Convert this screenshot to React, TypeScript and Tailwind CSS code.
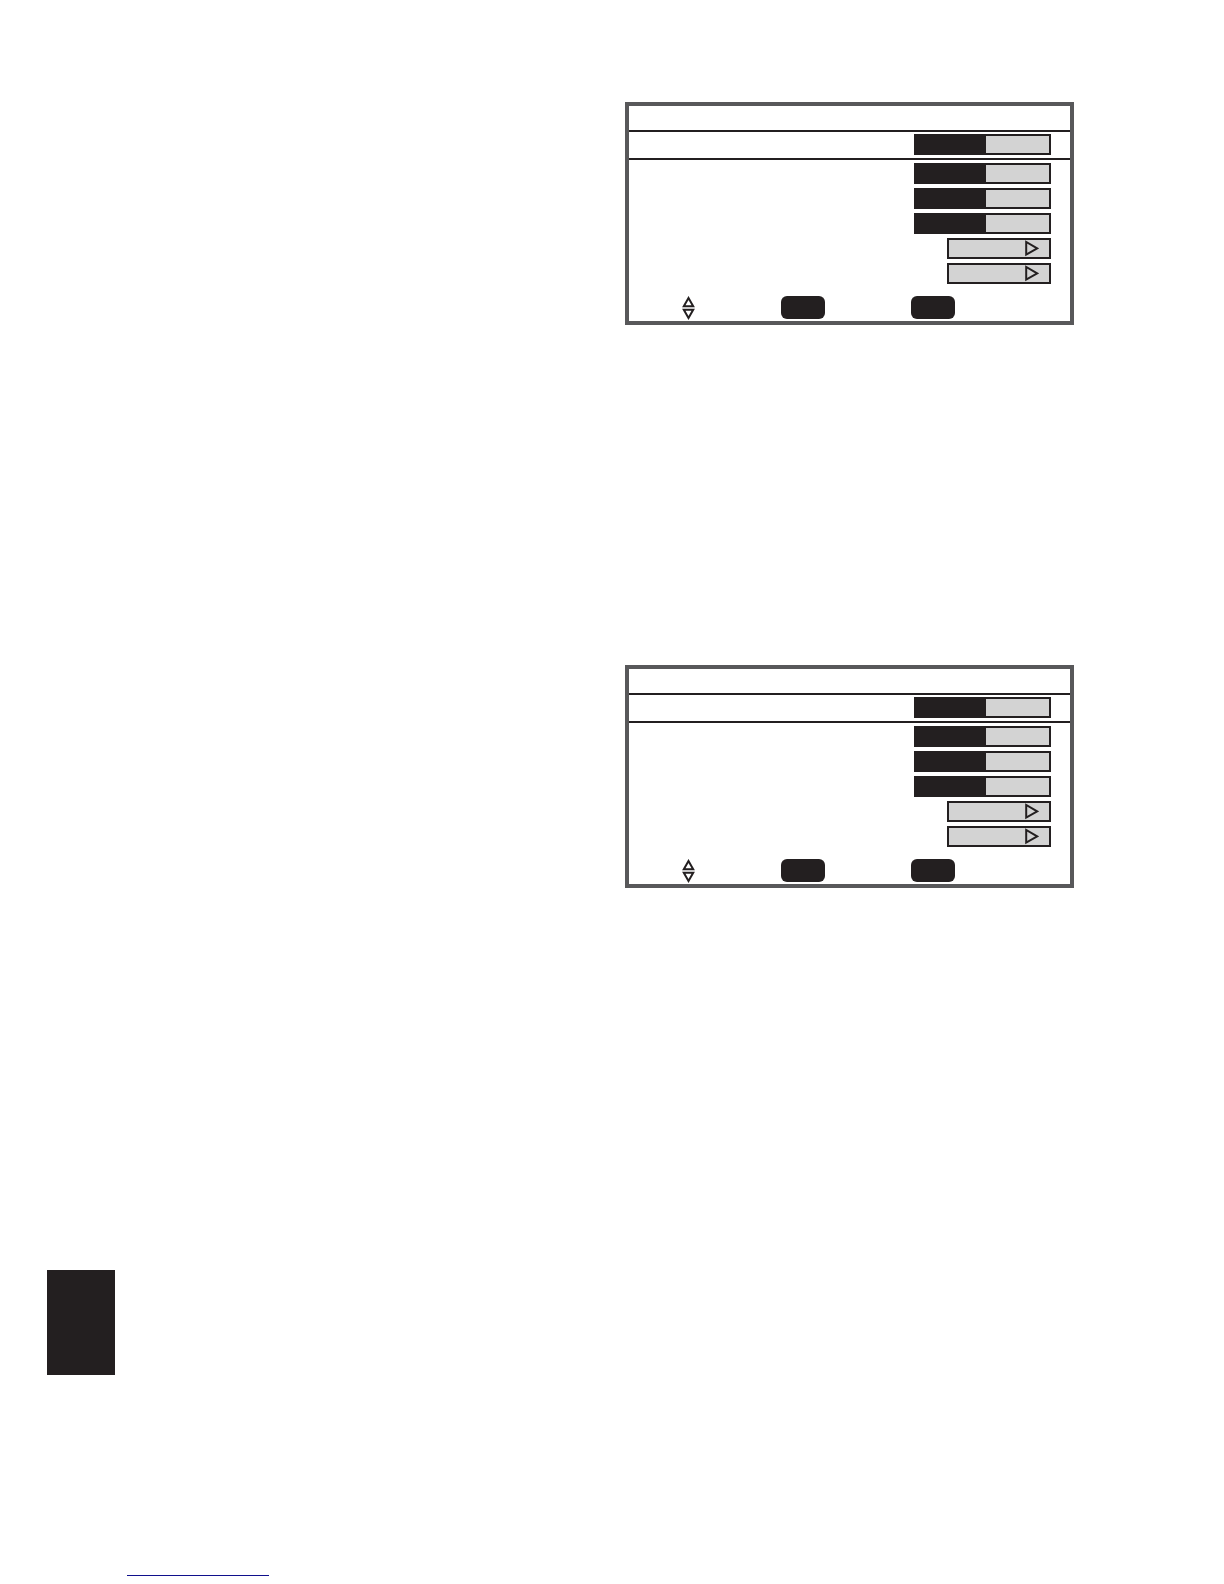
import React, { useState } from "react";

const STEPS = 19;

const LevelBar = ({ label }: { label: string }) => {
  const [level, setLevel] = useState(10);
  const fill = `${(level / STEPS) * 100}%`;

  return (
    <input
      type="range"
      min={0}
      max={STEPS}
      value={level}
      onChange={(e) => setLevel(Number(e.target.value))}
      aria-label={label}
      className="block h-[21px] w-[137px] appearance-none border-2 border-[#231f20] [&::-webkit-slider-thumb]:appearance-none [&::-webkit-slider-thumb]:opacity-0"
      style={{
        backgroundImage: `linear-gradient(to right, #231f20 ${fill}, #d3d3d3 ${fill})`,
      }}
    />
  );
};

const SubmenuButton = ({ label }: { label: string }) => {
  return (
    <button
      type="button"
      aria-label={label}
      className="flex h-[21px] w-[104px] items-center justify-end border-2 border-[#231f20] bg-[#d3d3d3] pr-2.5"
    >
      <svg width="14" height="17" viewBox="0 0 14 17" fill="none">
        <path d="M1.2 2V14.6L12.2 8.3Z" stroke="#231f20" strokeWidth="2" />
      </svg>
    </button>
  );
};

const KeyButton = ({ label }: { label: string }) => {
  return (
    <button
      type="button"
      aria-label={label}
      className="h-[23px] w-11 rounded-md bg-[#231f20]"
    />
  );
};

const MenuPanel = () => {
  return (
    <section className="border-4 border-[#58585a] bg-white">
      <div className="h-[26px] border-b-2 border-[#231f20]" />
      <div className="flex h-7 justify-end border-b-2 border-[#231f20] pt-0.5 pr-[19px]">
        <LevelBar label="Level 1" />
      </div>
      <div className="flex flex-col items-end gap-1 pt-[3px] pr-[19px]">
        <LevelBar label="Level 2" />
        <LevelBar label="Level 3" />
        <LevelBar label="Level 4" />
        <SubmenuButton label="Submenu 1" />
        <SubmenuButton label="Submenu 2" />
      </div>
      <div className="flex items-start gap-[86px] pt-3 pb-px pl-[53px]">
        <svg width="13" height="24" viewBox="0 0 13 24" fill="none">
          <path d="M6.5 2L11.2 10.2H1.8Z" stroke="#231f20" strokeWidth="2" />
          <path d="M6.5 22L11.2 13.8H1.8Z" stroke="#231f20" strokeWidth="2" />
        </svg>
        <KeyButton label="Select" />
        <KeyButton label="Exit" />
      </div>
    </section>
  );
};

const App = () => {
  return (
    <main className="bg-white pt-[102px] pb-2 font-['Liberation_Sans',sans-serif]">
      <div className="grid grid-cols-2">
        <div className="col-start-2 flex flex-col gap-[340px] pr-[150px] pl-[13px]">
          <MenuPanel />
          <MenuPanel />
        </div>
      </div>
      <div className="mt-[382px] ml-[47px] h-[105px] w-[68px] bg-[#231f20]" />
      <footer className="mt-[184px] pl-[127px]">
        <a
          href="#top"
          aria-label="Back to top"
          className="block h-[17px] w-[142px] border-b border-[#10108c]"
        />
      </footer>
    </main>
  );
};

export default App;
